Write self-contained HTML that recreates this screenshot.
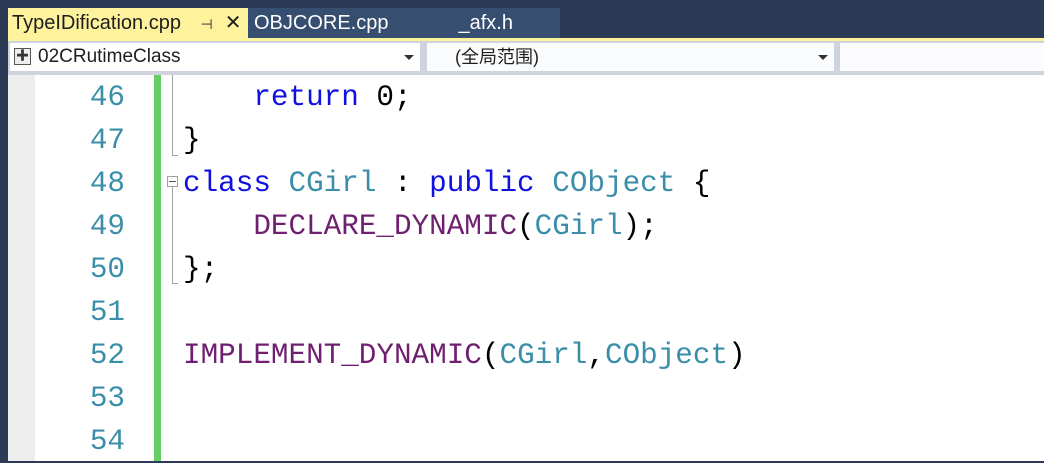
<!DOCTYPE html>
<html><head><meta charset="utf-8"><style>
*{margin:0;padding:0;box-sizing:border-box}
body{width:1044px;height:461px;overflow:hidden;background:#2b3a55;position:relative;font-family:"Liberation Sans","Noto Sans CJK SC",sans-serif}
.abs{position:absolute}
.tab{top:8px;height:31px;font-size:20px;line-height:31px;white-space:nowrap}
.code{font-family:"Liberation Mono",monospace;font-size:29.3px;white-space:pre;line-height:43px;position:absolute;left:183px}
.ln{font-family:"Liberation Mono",monospace;font-size:29.3px;line-height:43px;position:absolute;right:919px;color:#3a8eaa;text-align:right}
.kw{color:#1010e0}.ty{color:#3a8eaa}.mc{color:#6f1f6f}.bk{color:#000}
</style></head><body>
<div class="abs tab" style="left:8px;width:240px;background:#fff29d;color:#1e1e1e;padding-left:4px">TypeIDification.cpp <span style="font-size:14px;margin-left:14px">⊣</span><span style="margin-left:12px">✕</span></div>
<div class="abs tab" style="left:248px;width:312px;background:#364e6f;color:#fff;padding-left:6px">OBJCORE.cpp<span style="margin-left:70px">_afx.h</span></div>
<div class="abs" style="left:8px;top:38px;width:1036px;height:3px;background:#fff29d"></div>
<div class="abs" style="left:8px;top:41px;width:1036px;height:34px;background:#cfd3de"></div>
<div class="abs" style="left:10px;top:43px;width:410px;height:28px;background:#fff;font-size:19px;line-height:28px;padding-left:28px;color:#1e1e1e">02CRutimeClass
<div class="abs" style="left:4px;top:5px;width:17px;height:17px;border:1px solid #555;background:#eee;font-size:13px;line-height:14px;text-align:center;color:#333">✚</div>
<div class="abs" style="right:6px;top:12px;border:5px solid transparent;border-top:5px solid #333"></div></div>
<div class="abs" style="left:427px;top:43px;width:407px;height:28px;background:#fbfcfd;font-size:18px;line-height:28px;padding-left:28px;color:#1e1e1e">(全局范围)
<div class="abs" style="right:6px;top:12px;border:5px solid transparent;border-top:5px solid #333"></div></div>
<div class="abs" style="left:840px;top:43px;width:204px;height:28px;background:#fcfbfd"></div>
<div class="abs" style="left:8px;top:75px;width:1036px;height:386px;background:#fff"></div>
<div class="abs" style="left:8px;top:75px;width:27px;height:386px;background:#eeeeee"></div>
<div class="abs" style="left:154px;top:75px;width:7px;height:386px;background:#65cf65"></div>
<div class="ln" style="top:76px">46<br>47<br>48<br>49<br>50<br>51<br>52<br>53<br>54</div>
<div class="abs" style="left:172px;top:75px;width:1px;height:80px;background:#a0a0a0"></div>
<div class="abs" style="left:172px;top:155px;width:6px;height:1px;background:#a0a0a0"></div>
<div class="abs" style="left:167px;top:176px;width:11px;height:11px;border:1px solid #a0a0a0;background:#fff"></div>
<div class="abs" style="left:169px;top:181px;width:7px;height:1px;background:#555"></div>
<div class="abs" style="left:172px;top:187px;width:1px;height:96px;background:#a0a0a0"></div>
<div class="abs" style="left:172px;top:283px;width:6px;height:1px;background:#a0a0a0"></div>
<div class="code" style="top:76px"><span class="kw">    return</span> 0;
}
<span class="kw">class</span> <span class="ty">CGirl</span> : <span class="kw">public</span> <span class="ty">CObject</span> {
    <span class="mc">DECLARE_DYNAMIC</span>(<span class="ty">CGirl</span>);
};

<span class="mc">IMPLEMENT_DYNAMIC</span>(<span class="ty">CGirl</span>,<span class="ty">CObject</span>)</div>
</body></html>
